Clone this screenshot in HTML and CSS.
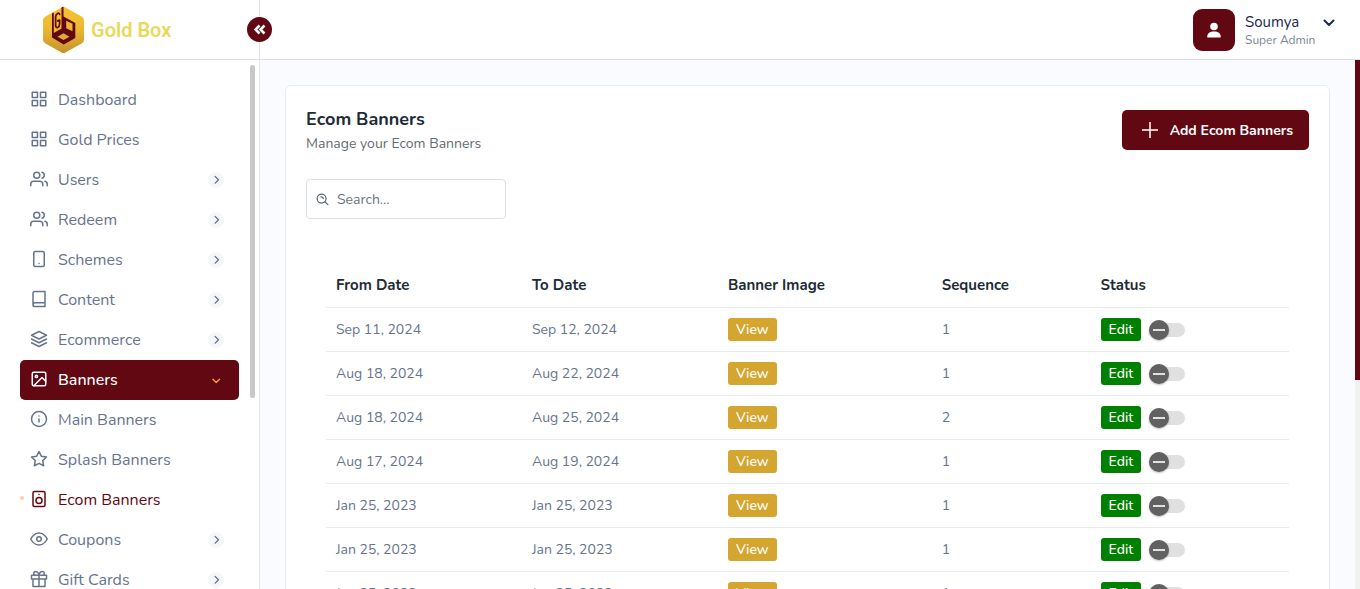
FILE: index.html
```html
<!DOCTYPE html>
<html lang="en">
<head>
<meta charset="utf-8">
<title>Gold Box - Ecom Banners</title>
<link rel="stylesheet" href="styles.css">
</head>
<body>
<svg class="sprite" aria-hidden="true">
  <symbol id="grid" viewBox="0 0 24 24"><path d="M3 3h7v7H3zM14 3h7v7h-7zM14 14h7v7h-7zM3 14h7v7H3z"/></symbol>
  <symbol id="users" viewBox="0 0 24 24"><path d="M17 21v-2a4 4 0 0 0-4-4H5a4 4 0 0 0-4 4v2M23 21v-2a4 4 0 0 0-3-3.870M16 3.130a4 4 0 0 1 0 7.750"/><circle cx="9" cy="7" r="4"/></symbol>
  <symbol id="phone" viewBox="0 0 24 24"><rect x="5" y="2" width="14" height="20" rx="2"/><path d="M12 18h.01"/></symbol>
  <symbol id="book" viewBox="0 0 24 24"><path d="M4 19.500A2.500 2.500 0 0 1 6.500 17H20M6.500 2H20v20H6.500A2.500 2.500 0 0 1 4 19.500v-15A2.500 2.500 0 0 1 6.500 2z"/></symbol>
  <symbol id="layers" viewBox="0 0 24 24"><path d="M12 2 2 7l10 5 10-5-10-5zM2 17l10 5 10-5M2 12l10 5 10-5"/></symbol>
  <symbol id="image" viewBox="0 0 24 24"><rect x="3" y="3" width="18" height="18" rx="2"/><circle cx="8.500" cy="8.500" r="1.500"/><path d="m21 15-5-5L5 21"/></symbol>
  <symbol id="info" viewBox="0 0 24 24"><circle cx="12" cy="12" r="10"/><path d="M12 16v-4M12 8h.01"/></symbol>
  <symbol id="star" viewBox="0 0 24 24"><path d="m12 2 3.090 6.260L22 9.270l-5 4.870 1.180 6.880L12 17.770l-6.180 3.250L7 14.140 2 9.270l6.910-1.010z"/></symbol>
  <symbol id="speaker" viewBox="0 0 24 24"><rect x="4" y="2" width="16" height="20" rx="2"/><circle cx="12" cy="14" r="4"/><path d="M12 6h.01"/></symbol>
  <symbol id="eye" viewBox="0 0 24 24"><path d="M1 12s4-8 11-8 11 8 11 8-4 8-11 8-11-8-11-8z"/><circle cx="12" cy="12" r="3"/></symbol>
  <symbol id="gift" viewBox="0 0 24 24"><path d="M20 12v10H4V12M2 7h20v5H2zM12 22V7M12 7H7.500a2.500 2.500 0 1 1 0-5C11 2 12 7 12 7zM12 7h4.500a2.500 2.500 0 1 0 0-5C13 2 12 7 12 7z"/></symbol>
  <symbol id="chevron" viewBox="0 0 16 16"><path d="m7.200 4.500 3.300 3.300-3.300 3.300"/></symbol>
</svg>

<header class="topbar">
  <div class="brand">
    <svg class="brand-logo" viewBox="0 0 42 48" aria-hidden="true">
      <defs><linearGradient id="gold" x1="0" y1="0" x2="0" y2="1"><stop offset="0" stop-color="#f6c22f"/><stop offset=".45" stop-color="#edb933"/><stop offset="1" stop-color="#c4932b"/></linearGradient></defs>
      <path d="M18.500 1.600q2-1.200 4 0l16.500 9.200q2 1.200 2 3.200v20q0 2-2 3.200L22.500 46.600q-2 1.200-4 0L2 37.200q-2-1.200-2-3.200V14q0-2 2-3.200z" fill="url(#gold)"/>
      <path d="m9 7.500 1.800-1v20.500l7.700-4.500V1.500l2-1V10.500l11.800 6.500v15L20.700 38.500 9 31.500z" fill="#620812"/>
      <path d="M16.600 8.500c-.2-2.800-4-1-4 2.500v8c0 4.500 4 2.500 4-1v-4l-2 .9" fill="none" stroke="#620812" stroke-width="1.700"/>
      <path d="m23.200 14.800 6.300 2.900v7.500l-6.300-3z" fill="#ecb633"/>
      <path d="m14.500 30.700 6-3.400 6 3.400-6 3.200z" fill="#e0a936"/>
    </svg>
    <span class="brand-name">Gold Box</span>
    <button class="collapse" type="button" aria-label="Collapse menu"><svg viewBox="0 0 25 25" aria-hidden="true"><path d="m12.500 8.500-4 4 4 4M17.500 8.500l-4 4 4 4"/></svg></button>
  </div>
  <button class="profile" type="button">
    <span class="avatar"><svg viewBox="0 0 16 16" aria-hidden="true"><circle cx="8" cy="4.500" r="3.800"/><path d="M1.300 15.500v-1.200C1.300 11.300 4 9.500 8 9.500s6.700 1.800 6.700 4.800v1.200z"/></svg></span>
    <span class="who"><span class="who-name">Soumya</span><span class="who-role">Super Admin</span></span>
    <svg class="caret" viewBox="0 0 12 12" aria-hidden="true"><path d="m1.500 3.500 4.500 4.500 4.500-4.500"/></svg>
  </button>
</header>

<div class="shell">
  <aside class="sidebar">
    <nav class="menu">
      <a href="#"><svg class="ico"><use href="#grid"/></svg>Dashboard</a>
      <a href="#"><svg class="ico"><use href="#grid"/></svg>Gold Prices</a>
      <a href="#"><svg class="ico"><use href="#users"/></svg>Users<svg class="arrow"><use href="#chevron"/></svg></a>
      <a href="#"><svg class="ico"><use href="#users"/></svg>Redeem<svg class="arrow"><use href="#chevron"/></svg></a>
      <a href="#"><svg class="ico"><use href="#phone"/></svg>Schemes<svg class="arrow"><use href="#chevron"/></svg></a>
      <a href="#"><svg class="ico"><use href="#book"/></svg>Content<svg class="arrow"><use href="#chevron"/></svg></a>
      <a href="#"><svg class="ico"><use href="#layers"/></svg>Ecommerce<svg class="arrow"><use href="#chevron"/></svg></a>
      <a href="#" class="open"><svg class="ico"><use href="#image"/></svg>Banners<svg class="arrow"><use href="#chevron"/></svg></a>
      <a href="#"><svg class="ico"><use href="#info"/></svg>Main Banners</a>
      <a href="#"><svg class="ico"><use href="#star"/></svg>Splash Banners</a>
      <a href="#" class="current"><svg class="ico"><use href="#speaker"/></svg>Ecom Banners</a>
      <a href="#"><svg class="ico"><use href="#eye"/></svg>Coupons<svg class="arrow"><use href="#chevron"/></svg></a>
      <a href="#"><svg class="ico"><use href="#gift"/></svg>Gift Cards<svg class="arrow"><use href="#chevron"/></svg></a>
    </nav>
    <div class="side-rail"><div class="side-thumb"></div></div>
  </aside>

  <main class="content">
    <section class="card">
      <div class="card-head">
        <div>
          <h1>Ecom Banners</h1>
          <p>Manage your Ecom Banners</p>
        </div>
        <button class="add" type="button"><svg viewBox="0 0 16 16" aria-hidden="true"><path d="M8 0v16M0 8h16"/></svg>Add Ecom Banners</button>
      </div>
      <label class="search">
        <svg viewBox="0 0 14 14" aria-hidden="true"><circle cx="6" cy="6" r="4.800"/><path d="m9.500 9.500 3.300 3M5.300 4.200A2 2 0 0 1 7.800 6"/></svg>
        <input type="text" placeholder="Search..." aria-label="Search">
      </label>
      <div class="table-wrap">
        <table>
          <thead><tr><th class="c-date">From Date</th><th class="c-date">To Date</th><th class="c-image">Banner Image</th><th class="c-seq">Sequence</th><th>Status</th></tr></thead>
          <tbody>
            <tr><td>Sep 11, 2024</td><td>Sep 12, 2024</td><td><button class="tag view">View</button></td><td>1</td><td><div class="actions"><button class="tag edit">Edit</button><input class="switch" type="checkbox" aria-label="Active"></div></td></tr>
            <tr><td>Aug 18, 2024</td><td>Aug 22, 2024</td><td><button class="tag view">View</button></td><td>1</td><td><div class="actions"><button class="tag edit">Edit</button><input class="switch" type="checkbox" aria-label="Active"></div></td></tr>
            <tr><td>Aug 18, 2024</td><td>Aug 25, 2024</td><td><button class="tag view">View</button></td><td>2</td><td><div class="actions"><button class="tag edit">Edit</button><input class="switch" type="checkbox" aria-label="Active"></div></td></tr>
            <tr><td>Aug 17, 2024</td><td>Aug 19, 2024</td><td><button class="tag view">View</button></td><td>1</td><td><div class="actions"><button class="tag edit">Edit</button><input class="switch" type="checkbox" aria-label="Active"></div></td></tr>
            <tr><td>Jan 25, 2023</td><td>Jan 25, 2023</td><td><button class="tag view">View</button></td><td>1</td><td><div class="actions"><button class="tag edit">Edit</button><input class="switch" type="checkbox" aria-label="Active"></div></td></tr>
            <tr><td>Jan 25, 2023</td><td>Jan 25, 2023</td><td><button class="tag view">View</button></td><td>1</td><td><div class="actions"><button class="tag edit">Edit</button><input class="switch" type="checkbox" aria-label="Active"></div></td></tr>
            <tr><td>Jan 25, 2023</td><td>Jan 25, 2023</td><td><button class="tag view">View</button></td><td>1</td><td><div class="actions"><button class="tag edit">Edit</button><input class="switch" type="checkbox" aria-label="Active"></div></td></tr>
          </tbody>
        </table>
      </div>
    </section>
  </main>
  <div class="page-rail"><div class="page-thumb"></div></div>
</div>
</body>
</html>
```
FILE: styles.css
```css
* { box-sizing: border-box; }
body {
  margin: 0;
  height: 100vh;
  display: flex;
  flex-direction: column;
  overflow: hidden;
  font: 14px/21px Nunito, Lato, "Open Sans", sans-serif;
  color: #67748e;
  background: #fafbfe;
}
button, input { font: inherit; }
button { border: 0; padding: 0; cursor: pointer; }
svg { fill: none; stroke: currentColor; stroke-width: 2; stroke-linecap: round; stroke-linejoin: round; flex: none; }
.sprite { position: absolute; width: 0; height: 0; }

.topbar {
  display: flex;
  justify-content: space-between;
  flex: none;
  height: 60px;
  background: #fff;
  border-bottom: 1px solid #dcdee3;
}
.brand {
  position: relative;
  display: flex;
  align-items: center;
  gap: 6px;
  width: 260px;
  padding: 1px 0 0 43px;
  border-right: 1px solid #e0e2e8;
}
.brand-logo { width: 42px; height: 48px; stroke: none; }
.brand-name { font: 600 20px/24px Roboto, sans-serif; color: #e9d95c; }
.collapse {
  position: absolute;
  top: 17px;
  right: -13px;
  width: 25px;
  height: 25px;
  border-radius: 50%;
  background: #620812;
  color: #fff;
}
.collapse svg { display: block; stroke-width: 2.5; stroke-linecap: butt; stroke-linejoin: miter; }
.profile {
  display: flex;
  align-items: center;
  gap: 10px;
  padding-right: 25px;
  background: none;
  text-align: left;
  color: #1b2850;
}
.avatar {
  display: grid;
  place-items: center;
  width: 42px;
  height: 42px;
  border-radius: 9px;
  background: #620812;
}
.avatar svg { width: 16px; height: 16px; fill: #fff; stroke: none; }
.who { display: flex; flex-direction: column; width: 68px; padding-top: 2px; }
.who-name { font-size: 15px; line-height: 18px; }
.who-role { font-size: 12px; line-height: 18px; color: #7c8697; white-space: nowrap; }
.caret { width: 12px; height: 12px; align-self: flex-start; margin-top: 17px; }

.shell { display: flex; flex: 1; min-height: 0; }
.sidebar {
  display: flex;
  width: 260px;
  flex: none;
  background: #fff;
  border-right: 1px solid #e6e8ef;
}
.menu { flex: 1; padding: 20px 11px 0 20px; overflow: hidden; }
.menu a {
  position: relative;
  display: flex;
  align-items: center;
  gap: 10px;
  height: 40px;
  padding: 0 15px 0 10px;
  border-radius: 5px;
  font-size: 16px;
  line-height: 20px;
  color: #67748e;
  text-decoration: none;
}
.ico { width: 18px; height: 18px; margin-bottom: 2px; }
.arrow { width: 16px; height: 16px; margin-left: auto; border-radius: 50%; background: #f6f7f9; stroke-width: 1.3; }
.menu .open { background: #620812; color: #fff; font-weight: 500; }
.open .arrow { transform: rotate(90deg); background: none; color: #ff9f43; }
.menu .current { color: #620812; }
.current::before {
  content: "";
  position: absolute;
  left: 0;
  top: 16px;
  width: 4px;
  height: 4px;
  border-radius: 50%;
  background: #fecfa1;
}
.side-rail { width: 9px; padding-top: 5px; }
.side-thumb { width: 5px; height: 63.5%; border-radius: 3px; background: #c8c8c8; }
.page-rail { width: 5px; background: #f1f1f1; }
.page-thumb { height: 320px; background: #620812; }

.content { flex: 1; min-width: 0; padding: 25px 25px 0; overflow: hidden; }
.card { padding: 24px 20px; border: 1px solid #e8ebed; border-radius: 6px; background: #fff; }
.card-head { display: flex; justify-content: space-between; align-items: flex-start; }
h1 { margin: 0; font-size: 18px; line-height: 18px; font-weight: 700; color: #212b36; }
p { margin: 5px 0 0; color: #646b72; }
.add {
  display: flex;
  align-items: center;
  gap: 12px;
  height: 40px;
  padding: 0 16px 0 20px;
  border-radius: 5px;
  background: #620812;
  color: #fff;
  font-weight: 700;
}
.add svg { width: 16px; height: 16px; stroke-width: 1.5; }
.search {
  display: flex;
  align-items: center;
  gap: 8px;
  width: 200px;
  height: 40px;
  margin-top: 25px;
  padding: 0 9px;
  border: 1px solid #dbe0e6;
  border-radius: 4px;
  color: #5b6670;
}
.search svg { width: 13px; height: 13px; stroke-width: 1.3; }
.search input { width: 100%; height: 21px; border: 0; padding: 1px 0 0; outline: 0; background: none; color: #5b6670; }
.search input::placeholder { color: #6b7480; }
.table-wrap { padding: 44px 20px 0; }
table { width: 100%; border-collapse: collapse; table-layout: fixed; }
th, td { height: 44px; padding: 0 10px; border-bottom: 1px solid #e8ebed; text-align: left; }
th { font-size: 15px; line-height: 20px; font-weight: 700; color: #212b36; }
.c-date { width: 20.35%; }
.c-image { width: 22.2%; }
.c-seq { width: 16.5%; }
.tag { display: block; height: 23px; padding: 0 8px; border-radius: 3px; color: #fff; font-weight: 500; }
.view { background: #d4a52f; }
.edit { background: #008000; }
.actions { display: flex; align-items: center; gap: 8px; }
.switch { appearance: none; position: relative; width: 36px; height: 20px; margin: 2px 0 0; }
.switch::before {
  content: "";
  position: absolute;
  inset: 3px 0;
  border-radius: 7px;
  background: #e0e0e0;
}
.switch::after {
  content: "";
  position: absolute;
  left: 0;
  top: 0;
  width: 20px;
  height: 20px;
  border-radius: 50%;
  background: linear-gradient(#e0e0e0, #e0e0e0) center / 12px 2px no-repeat, #616161;
  box-shadow: 0 1px 2px #0004;
}
```
